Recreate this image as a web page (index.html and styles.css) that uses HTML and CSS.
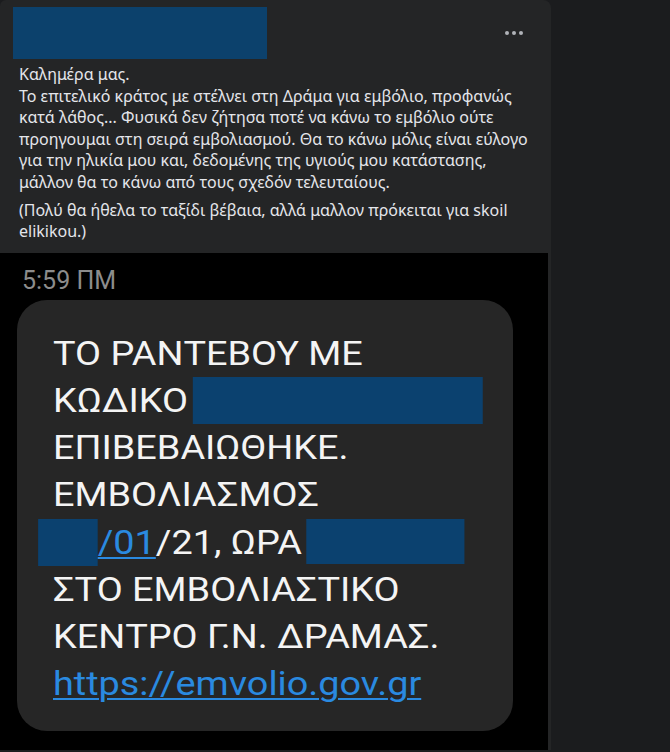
FILE: index.html
```html
<!DOCTYPE html>
<html lang="el">
<head>
<meta charset="utf-8">
<title>Post</title>
<link rel="stylesheet" href="styles.css">
</head>
<body>
<div class="page">
  <article class="post">
    <header class="post-header">
      <div class="redact name-redact"></div>
      <div class="more" aria-label="Περισσότερα">
        <span class="dot"></span><span class="dot"></span><span class="dot"></span>
      </div>
    </header>
    <div class="post-text">
      <p class="para">Καλημέρα μας.<br>Το επιτελικό κράτος με στέλνει στη Δράμα για εμβόλιο, προφανώς<br>κατά λάθος... Φυσικά δεν ζήτησα ποτέ να κάνω το εμβόλιο ούτε<br>προηγουμαι στη σειρά εμβολιασμού. Θα το κάνω μόλις είναι εύλογο<br>για την ηλικία μου και, δεδομένης της υγιούς μου κατάστασης,<br>μάλλον θα το κάνω από τους σχεδόν τελευταίους.</p>
      <p class="para">(Πολύ θα ήθελα το ταξίδι βέβαια, αλλά μαλλον πρόκειται για skoil<br>elikikou.)</p>
    </div>
    <div class="photo">
      <div class="sms-time">5:59 ΠΜ</div>
      <div class="sms-bubble">
        <p class="sms-text">ΤΟ ΡΑΝΤΕΒΟΥ ΜΕ<br>ΚΩΔΙΚΟ <span class="redact code-redact"></span><br>ΕΠΙΒΕΒΑΙΩΘΗΚΕ.<br>ΕΜΒΟΛΙΑΣΜΟΣ<br><span class="redact day-redact"></span><span class="sms-link">/01</span>/21, ΩΡΑ <span class="redact time-redact"></span><br>ΣΤΟ ΕΜΒΟΛΙΑΣΤΙΚΟ<br>ΚΕΝΤΡΟ Γ.Ν. ΔΡΑΜΑΣ.<br><span class="sms-link">https://emvolio.gov.gr</span></p>
      </div>
    </div>
  </article>
</div>
</body>
</html>
```
FILE: styles.css
```css
html, body {
  margin: 0;
  padding: 0;
}
body {
  background: #1b1c1e;
  width: 670px;
  height: 752px;
  overflow: hidden;
}
.page {
  display: flex;
  align-items: flex-start;
}
.post {
  width: 551px;
  background: #242526;
  border-radius: 6px 8px 0 0;
  font-family: "Noto Sans", "Open Sans", sans-serif;
  color: #e4e6eb;
}
.post-header {
  display: flex;
  align-items: center;
  justify-content: space-between;
  padding: 7px 28px 0 13px;
}
.redact {
  background: #0b416f;
}
.name-redact {
  width: 254px;
  height: 52px;
  background: #0c416c;
}
.more {
  display: flex;
  gap: 3px;
}
.dot {
  width: 4px;
  height: 4px;
  border-radius: 50%;
  background: #b0b3b8;
}
.post-text {
  padding: 5px 12px 10px 19px;
}
.para {
  margin: 0;
  font-size: 16px;
  line-height: 21.6px;
  white-space: nowrap;
}
.para + .para {
  margin-top: 6px;
}
.photo {
  background: #000;
  width: 548px;
  height: 497px;
  padding: 13px 0 0 0;
  box-sizing: border-box;
  font-family: Roboto, "Noto Sans", sans-serif;
}
.sms-time {
  margin-left: 22px;
  font-size: 25px;
  line-height: 30px;
  color: #8c8c8c;
}
.sms-bubble {
  margin: 4px 0 0 17px;
  width: 496px;
  height: 431px;
  box-sizing: border-box;
  background: #262626;
  border-radius: 30px;
  padding: 30px 0 0 36px;
}
.sms-text {
  margin: 0;
  font-size: 33px;
  line-height: 47.2px;
  color: #f4f4f4;
  white-space: nowrap;
  transform: scaleX(1.146);
  transform-origin: left top;
}
.code-redact {
  display: inline-block;
  width: 253px;
  height: 47px;
  margin-left: -4px;
  vertical-align: top;
}
.day-redact {
  display: inline-block;
  width: 52px;
  height: 47px;
  margin-left: -13px;
  vertical-align: top;
}
.time-redact {
  display: inline-block;
  width: 138px;
  height: 45px;
  margin-left: -4px;
  vertical-align: top;
}
.sms-link {
  color: #2a8ae0;
  text-decoration: underline;
  text-decoration-thickness: 2px;
  text-underline-offset: 3px;
}
```
